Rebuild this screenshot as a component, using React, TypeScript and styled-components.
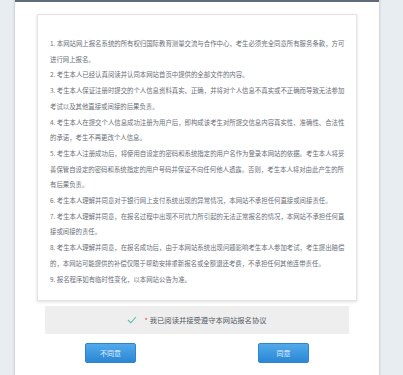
import React from 'react';
import styled, { createGlobalStyle } from 'styled-components';

const GlobalStyle = createGlobalStyle`
  html, body {
    margin: 0;
    padding: 0;
    background: #e8edf1;
    font-family: "Noto Sans CJK SC", "Noto Sans", sans-serif;
  }
`;

const Page = styled.div`
  height: 375px;
  overflow: hidden;
  display: flex;
`;

const Panel = styled.div`
  margin-left: 15px;
  width: 364px;
  height: 375px;
  background: #fff;
  border-top: 2px solid #5f6b79;
  box-sizing: border-box;
  box-shadow: 0 0 2px 1px rgba(0, 0, 0, 0.12);
  display: flex;
  flex-direction: column;
  align-items: center;
  padding-top: 12px;
`;

const TermsBox = styled.div`
  width: 320px;
  height: 287px;
  box-sizing: border-box;
  border: 1px solid #e4e4e4;
  box-shadow: 0 1px 3px rgba(0, 0, 0, 0.14);
  padding: 21px 0 0 12px;
  color: #6a6e78;
  font-size: 6.4px;
  line-height: 15.7px;
  white-space: nowrap;
`;

const Clause = styled.p`
  margin: 0;
`;

const AgreeBar = styled.div`
  margin-top: 5px;
  width: 304px;
  height: 28px;
  background: #eeeeee;
  display: flex;
  align-items: center;
  justify-content: center;
  gap: 4px;
  font-size: 7.3px;
  color: #555a62;
`;

const Star = styled.span`
  color: #e4393c;
  font-size: 7px;
  margin: 0 2px 0 3px;
`;

const Buttons = styled.div`
  margin-top: 9px;
  display: flex;
  gap: 122px;
`;

const Button = styled.button`
  width: 51px;
  height: 20px;
  padding: 0;
  border: 1px solid #3185cc;
  border-radius: 2px;
  background: linear-gradient(#51aaea, #2b87d5);
  color: #e3f1ff;
  font-family: inherit;
  font-size: 7px;
  cursor: pointer;
`;

const clauses: string[][] = [
  ['1. 本网站网上报名系统的所有权归国际教育测量交流与合作中心，考生必须完全同意所有服务条款，方可', '进行网上报名。'],
  ['2. 考生本人已经认真阅读并认同本网站首页中提供的全部文件的内容。'],
  ['3. 考生本人保证注册时提交的个人信息资料真实、正确，并将对个人信息不真实或不正确而导致无法参加', '考试以及其他直接或间接的后果负责。'],
  ['4. 考生本人在提交个人信息成功注册为用户后，即构成该考生对所提交信息内容真实性、准确性、合法性', '的承诺，考生不再更改个人信息。'],
  [
    '5. 考生本人注册成功后，将使用自设定的密码和系统指定的用户名作为登录本网站的依据。考生本人将妥',
    '善保管自设定的密码和系统指定的用户号码并保证不向任何他人透露。否则，考生本人将对由此产生的所',
    '有后果负责。',
  ],
  ['6. 考生本人理解并同意对于银行网上支付系统出现的异常情况，本网站不承担任何直接或间接责任。'],
  ['7. 考生本人理解并同意，在报名过程中出现不可抗力所引起的无法正常报名的情况，本网站不承担任何直', '接或间接的责任。'],
  ['8. 考生本人理解并同意，在报名成功后，由于本网站系统出现问题影响考生本人参加考试，考生提出赔偿', '的，本网站可能提供的补偿仅限于帮助安排重新报名或全额退还考费，不承担任何其他连带责任。'],
  ['9. 报名程序如有临时性变化，以本网站公告为准。'],
];

const Check = () => (
  <svg width="10" height="8" viewBox="0 0 10 8">
    <polyline points="1,4 3.8,6.8 9,1" fill="none" stroke="#5fb9b1" strokeWidth="1.1" />
  </svg>
);

export default function App() {
  return (
    <Page>
      <GlobalStyle />
      <Panel>
        <TermsBox>
          {clauses.map((lines, i) => (
            <Clause key={i}>
              {lines.map((line, j) => (
                <React.Fragment key={j}>
                  {j > 0 && <br />}
                  {line}
                </React.Fragment>
              ))}
            </Clause>
          ))}
        </TermsBox>
        <AgreeBar>
          <Check />
          <span>
            <Star>*</Star>我已阅读并接受遵守本网站报名协议
          </span>
        </AgreeBar>
        <Buttons>
          <Button>不同意</Button>
          <Button>同意</Button>
        </Buttons>
      </Panel>
    </Page>
  );
}
